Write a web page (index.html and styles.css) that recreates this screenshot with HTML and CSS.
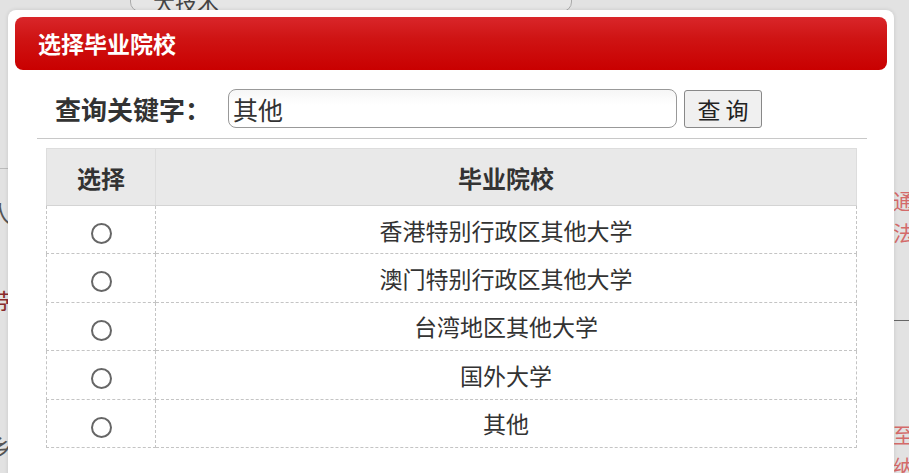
FILE: index.html
```html
<!DOCTYPE html>
<html lang="zh">
<head>
<meta charset="utf-8">
<link rel="stylesheet" href="styles.css">
</head>
<body>
<div class="page">
  <div class="bg-input"><span>大技术</span></div>
  <div class="bg-frag f1">人</div>
  <div class="bg-frag f2">带</div>
  <div class="bg-frag f3">乡</div>
  <div class="bg-frag f4">通<br>法</div>
  <div class="bg-frag f5">至<br>纳</div>
  <div class="bg-line l1"></div>
  <div class="bg-line l2"></div>

  <div class="dialog">
    <div class="dialog-head">选择毕业院校</div>
    <div class="search">
      <span class="search-label">查询关键字：</span>
      <input class="search-input" type="text" value="其他">
      <button class="search-btn">查 询</button>
    </div>
    <div class="sep"></div>
    <table class="list">
      <thead>
        <tr><th class="c1">选择</th><th>毕业院校</th></tr>
      </thead>
      <tbody>
        <tr><td class="c1"><span class="radio"></span></td><td>香港特别行政区其他大学</td></tr>
        <tr><td class="c1"><span class="radio"></span></td><td>澳门特别行政区其他大学</td></tr>
        <tr><td class="c1"><span class="radio"></span></td><td>台湾地区其他大学</td></tr>
        <tr><td class="c1"><span class="radio"></span></td><td>国外大学</td></tr>
        <tr><td class="c1"><span class="radio"></span></td><td>其他</td></tr>
      </tbody>
    </table>
  </div>
</div>
</body>
</html>
```

FILE: styles.css
```css
* { box-sizing: border-box; }
html, body { margin: 0; padding: 0; }
body {
  width: 909px;
  height: 473px;
  overflow: hidden;
  background: #e3e3e3;
  font-family: "Noto Sans CJK SC", "Noto Sans", sans-serif;
  color: #333;
}
.page {
  position: relative;
  width: 909px;
  height: 473px;
  background: #e2e2e2;
}
.bg-input {
  position: absolute;
  left: 130px;
  top: -20px;
  width: 442px;
  height: 32px;
  border: 1px solid #aaa;
  border-radius: 10px;
  background: #e6e6e6;
  font-size: 22px;
  color: #444;
  padding-left: 22px;
  line-height: 40px;
}
.bg-frag {
  position: absolute;
  font-size: 24px;
  line-height: 30px;
  color: #555;
}
.f1 { left: -12px; top: 198px; }
.f2 { left: -14px; top: 286px; color: #8a2a2a; }
.f3 { left: -12px; top: 432px; }
.f4 { left: 893px; top: 184px; color: #d46a6a; font-size: 21px; line-height: 32px; }
.f5 { left: 893px; top: 418px; color: #d46a6a; font-size: 21px; line-height: 32px; }
.bg-line {
  position: absolute;
  height: 1px;
  background: #bbb;
}
.l1 { left: 0; top: 168px; width: 8px; }
.l2 { left: 893px; top: 320px; width: 16px; background: #666; }

.dialog {
  position: absolute;
  left: 8px;
  top: 10px;
  width: 886px;
  height: 480px;
  background: #fff;
  border-radius: 8px;
  padding: 7px;
  box-shadow: 0 0 4px rgba(0,0,0,0.12);
}
.dialog-head {
  height: 53px;
  border-radius: 8px;
  background: linear-gradient(#d9262a 0%, #cf1414 40%, #c90000 100%);
  color: #fff;
  font-weight: 700;
  font-size: 23px;
  line-height: 53px;
  padding-left: 23px;
}
.search {
  display: flex;
  align-items: center;
  padding: 19px 0 10px 40px;
  height: 68px;
}
.search-label {
  font-size: 26px;
  font-weight: 700;
  color: #333;
  width: 173px;
  white-space: nowrap;
}
.search-input {
  width: 449px;
  height: 39px;
  border: 1px solid #999;
  border-radius: 8px;
  font-family: "Noto Sans CJK SC", "Noto Sans", sans-serif;
  font-size: 25px;
  color: #333;
  padding: 0 4px;
  margin: 0;
  outline: none;
  background: linear-gradient(#f6f6f6, #fff 40%);
}
.search-btn {
  margin-left: 7px;
  width: 78px;
  height: 38px;
  border: 1px solid #888;
  border-radius: 3px;
  background: #f0f0f0;
  font-family: "Noto Sans CJK SC", "Noto Sans", sans-serif;
  font-size: 23px;
  color: #222;
  padding: 0;
}
.sep {
  margin: 0 20px 0 22px;
  height: 1px;
  background: #c8c8c8;
}
.list {
  margin: 9px 0 0 31px;
  width: 811px;
  border-collapse: collapse;
  font-size: 23px;
}
.list th {
  height: 57px;
  background: #e9e9e9;
  font-weight: 700;
  font-size: 24px;
  color: #333;
  border: 1px solid #ddd;
  border-bottom: 1px solid #d4d4d4;
  padding: 0;
}
.list td {
  height: 48.4px;
  text-align: center;
  border: 1px dashed #c4c4c4;
  padding: 0;
  color: #333;
}
.list .c1 { width: 109px; }
.radio {
  display: inline-block;
  width: 21px;
  height: 21px;
  border: 2px solid #666;
  border-radius: 50%;
  vertical-align: middle;
}
```
